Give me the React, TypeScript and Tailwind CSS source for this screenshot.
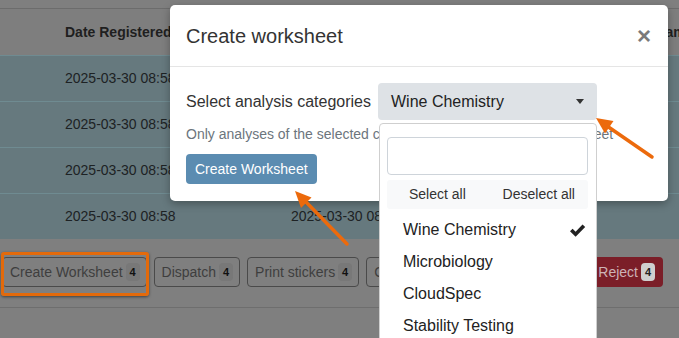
import React from "react";

const font = { fontFamily: '"Liberation Sans", Arial, sans-serif' };

function Badge({ children }: { children: React.ReactNode }) {
  return (
    <span className="ml-[3px] inline-flex h-[18px] min-w-[14px] items-center justify-center rounded-[4px] bg-[#787878] px-[3px] text-[11px] font-bold leading-none text-[#111]">
      {children}
    </span>
  );
}

function OutlineBtn({ label }: { label: string }) {
  return (
    <div className="flex h-[30px] shrink-0 items-center whitespace-nowrap rounded-[4px] border border-[#4a4a4a] pl-[7px] pr-[6px] text-[14px] text-[#3e3e3e]">
      {label}
      <Badge>4</Badge>
    </div>
  );
}

function Row({ second }: { second?: boolean }) {
  return (
    <div className="flex h-[46px] items-center border-t border-[#6f8b91] bg-[#66797e] text-[14px] text-[#1d2224]">
      <div className="w-[65px] shrink-0" />
      <div className="w-[226px] shrink-0 whitespace-nowrap">2025-03-30 08:58</div>
      {second && <div className="shrink-0 whitespace-nowrap">2025-03-30 08:58</div>}
    </div>
  );
}

export default function App() {
  return (
    <div className="relative h-[338px] w-[679px] overflow-hidden bg-[#7f7f7f]" style={font}>
      {/* background page */}
      <div className="h-[9px] border-b border-[#6c6c6c] bg-[#7f7f7f]" />
      <div className="flex h-[46px] items-center overflow-hidden whitespace-nowrap bg-[#7e7e7e] text-[14px] font-bold text-[#1f1f1f]">
        <div className="w-[65px] shrink-0" />
        <div className="w-[226px] shrink-0">Date Registered</div>
        <div className="w-[331px] shrink-0">Date Received</div>
        <div className="shrink-0">Date Sampled</div>
      </div>
      <Row />
      <Row />
      <Row />
      <Row second />
      <div className="flex items-center justify-between pl-[2px] pr-[16px] pt-[18px]">
        <div className="flex gap-[7px]">
          <OutlineBtn label="Create Worksheet" />
          <OutlineBtn label="Dispatch" />
          <OutlineBtn label="Print stickers" />
          <OutlineBtn label="Copy to new" />
        </div>
        <div className="flex h-[30px] items-center rounded-[4px] bg-[#7b1e28] px-[8px] text-[14px] text-[#cdb3b6]">
          Reject
          <span className="ml-[3px] inline-flex h-[18px] min-w-[14px] items-center justify-center rounded-[4px] bg-[#cfcfcf] px-[3px] text-[11px] font-bold leading-none text-[#222]">
            4
          </span>
        </div>
      </div>
      <div className="mt-[20px] border-t border-[#6e6e6e]" />

      {/* highlight box on button */}
      <div className="absolute left-[1px] top-[252px] h-[44px] w-[148px] rounded-[3px] border-[3px] border-[#e36a0b] shadow-[0_1px_3px_rgba(0,0,0,0.5)]" />

      {/* modal */}
      <div className="absolute left-[170px] top-[5px] w-[498px] rounded-[5px] bg-white text-[#333] shadow-[0_3px_9px_rgba(0,0,0,0.3)]">
        <div className="flex h-[62px] items-center justify-between border-b border-[#e5e5e5] pl-[16px] pr-[17px]">
          <div className="text-[20px] text-[#333]">Create worksheet</div>
          <div className="text-[24px] font-bold leading-none text-[#7a7a7a]">×</div>
        </div>
        <div className="px-[16px] pb-[17px] pt-[16px]">
          <div className="flex items-center">
            <div className="text-[16px] text-[#333]">Select analysis categories</div>
            <div className="relative ml-[7px]">
              <div className="flex h-[37px] w-[219px] items-center justify-between rounded-[4px] bg-[#dee2e6] pl-[13px] pr-[13px] text-[16px] text-[#222]">
                <span>Wine Chemistry</span>
                <span className="h-0 w-0 border-l-[4px] border-r-[4px] border-t-[5px] border-l-transparent border-r-transparent border-t-[#333]" />
              </div>
              <div className="absolute left-[1px] top-[40px] z-10 h-[240px] w-[218px] rounded-[4px] border border-[#cfcfcf] bg-white">
                <div className="px-[7px] pt-[13px]">
                  <div className="h-[38px] w-[201px] rounded-[4px] border border-[#ced4da] bg-white" />
                  <div className="mt-[5px] flex h-[29px] w-[201px] items-center justify-between rounded-[3px] bg-[#f8f9fa] pl-[22px] pr-[13px] text-[14px] text-[#333]">
                    <span>Select all</span>
                    <span>Deselect all</span>
                  </div>
                </div>
                <div className="mt-[5px] text-[16px] text-[#222]">
                  <div className="flex h-[32px] items-center justify-between pl-[23px] pr-[10px]">
                    <span>Wine Chemistry</span>
                    <svg width="17" height="15" viewBox="0 0 17 15">
                      <path d="M1 8.3 L3.6 5.7 L6.6 8.8 L13.5 1.5 L16.2 4.1 L6.6 13.8 Z" fill="#222" />
                    </svg>
                  </div>
                  <div className="flex h-[32px] items-center pl-[23px]">Microbiology</div>
                  <div className="flex h-[32px] items-center pl-[23px]">CloudSpec</div>
                  <div className="flex h-[32px] items-center pl-[23px]">Stability Testing</div>
                </div>
              </div>
            </div>
          </div>
          <div className="mt-[4px] whitespace-nowrap text-[14px] leading-[20px] text-[#6c757d]">
            Only analyses of the selected categories are added to this worksheet
          </div>
          <div className="mt-[10px] flex">
            <div className="flex h-[30px] items-center rounded-[4px] bg-[#5b8cb1] px-[9px] text-[14px] text-white">
              Create Worksheet
            </div>
          </div>
        </div>
      </div>

      {/* arrows */}
      <svg className="pointer-events-none absolute left-0 top-0 z-20" width="679" height="338">
        <line x1="652" y1="157" x2="607" y2="126" stroke="#ec6a0c" strokeWidth="3.5" strokeLinecap="round" />
        <polygon points="596,118 613.5,121 605,133.5" fill="#ec6a0c" />
        <line x1="347" y1="244" x2="305" y2="201" stroke="#ec6a0c" strokeWidth="3.5" strokeLinecap="round" />
        <polygon points="295,191 311.5,197.5 301,208" fill="#ec6a0c" />
      </svg>
    </div>
  );
}
